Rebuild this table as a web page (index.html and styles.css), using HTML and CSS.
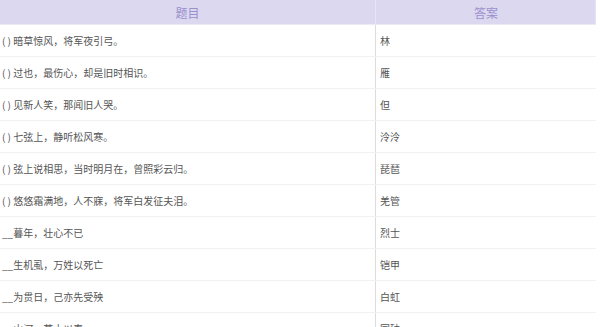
FILE: index.html
```html
<!DOCTYPE html>
<html lang="zh-CN">
<head>
<meta charset="utf-8">
<link rel="stylesheet" href="styles.css">
</head>
<body>
<div class="table">
  <div class="row head">
    <div class="cell q">题目</div>
    <div class="cell a">答案</div>
  </div>
  <div class="row"><div class="cell q">(&nbsp;)&nbsp;暗草惊风，将军夜引弓。</div><div class="cell a">林</div></div>
  <div class="row"><div class="cell q">(&nbsp;)&nbsp;过也，最伤心，却是旧时相识。</div><div class="cell a">雁</div></div>
  <div class="row"><div class="cell q">(&nbsp;)&nbsp;见新人笑，那闻旧人哭。</div><div class="cell a">但</div></div>
  <div class="row"><div class="cell q">(&nbsp;)&nbsp;七弦上，静听松风寒。</div><div class="cell a">泠泠</div></div>
  <div class="row"><div class="cell q">(&nbsp;)&nbsp;弦上说相思，当时明月在，曾照彩云归。</div><div class="cell a">琵琶</div></div>
  <div class="row"><div class="cell q">(&nbsp;)&nbsp;悠悠霜满地，人不寐，将军白发征夫泪。</div><div class="cell a">羌管</div></div>
  <div class="row"><div class="cell q">__暮年，壮心不已</div><div class="cell a">烈士</div></div>
  <div class="row"><div class="cell q">__生机虱，万姓以死亡</div><div class="cell a">铠甲</div></div>
  <div class="row"><div class="cell q">__为贯日，己亦先受殃</div><div class="cell a">白虹</div></div>
  <div class="row"><div class="cell q">__山河，草木以春</div><div class="cell a">国破</div></div>
</div>
</body>
</html>
```
FILE: styles.css
```css
html, body {
  margin: 0;
  padding: 0;
  background: #fff;
}
body {
  font-family: "Noto Sans CJK SC", "Noto Sans", sans-serif;
  overflow: hidden;
}
.table {
  width: 596px;
  display: flex;
  flex-direction: column;
}
.row {
  display: grid;
  grid-template-columns: 376px 220px;
  height: 32px;
  border-bottom: 1px solid #f1f1f1;
  box-sizing: border-box;
}
.row.head {
  height: 25px;
  background: #dcd8f0;
  border-bottom: 1px solid #eceaf6;
  border-right: 1px solid #e6e3f5;
}
.cell {
  display: flex;
  align-items: center;
  font-size: 10px;
  color: #555;
  white-space: nowrap;
  overflow: hidden;
}
.cell.q {
  padding-left: 2px;
  border-right: 1px solid #dcdcdc;
}
.cell.a {
  padding-left: 4px;
}
.head .cell {
  justify-content: center;
  padding-left: 0;
  font-size: 12px;
  color: #9a90cc;
}
.head .cell.q {
  border-right: 1px solid #e8e6f6;
}
```
